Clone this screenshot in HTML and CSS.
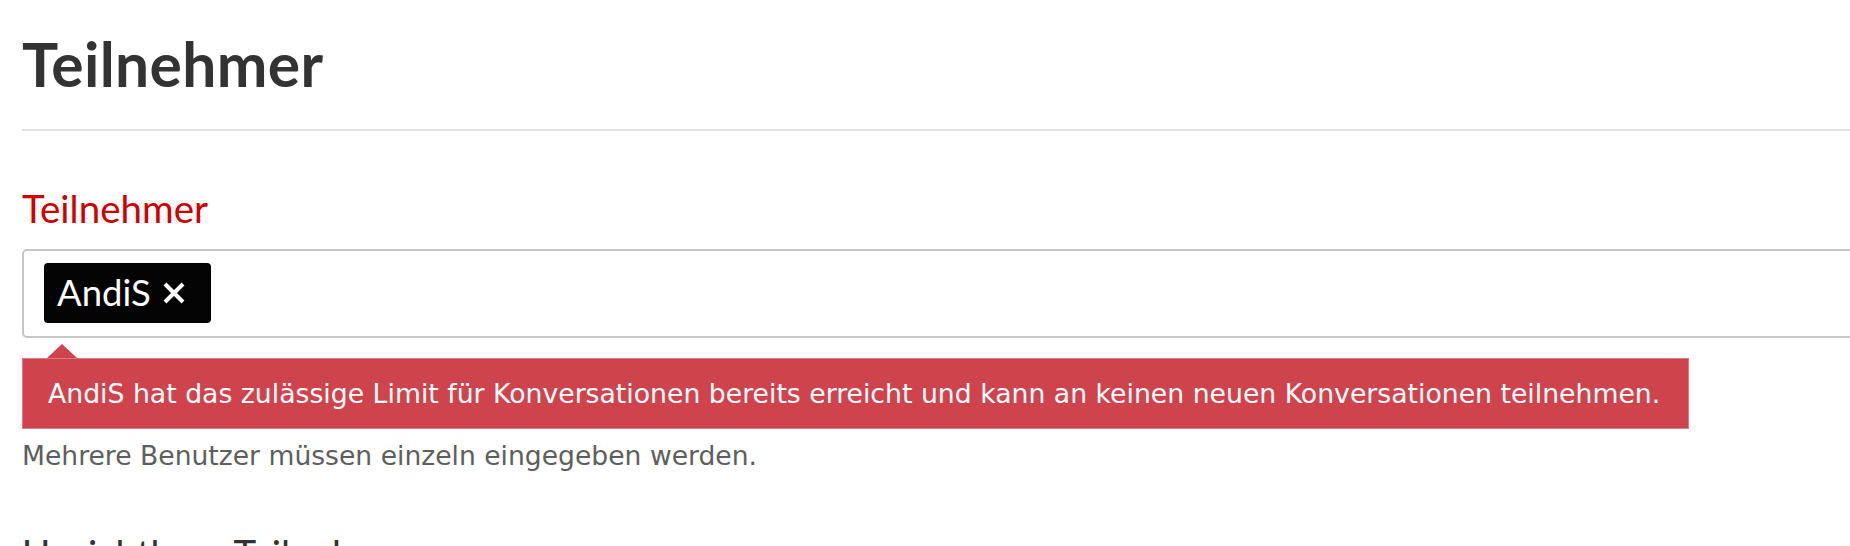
FILE: index.html
```html
<!DOCTYPE html>
<html lang="de">
<head>
<meta charset="utf-8">
<title>Teilnehmer</title>
<link rel="stylesheet" href="styles.css">
</head>
<body>
<div class="page">
  <h1 class="title">Teilnehmer</h1>
  <hr class="divider">
  <div class="field">
    <label class="field-label is-error">Teilnehmer</label>
    <div class="token-input">
      <span class="token"><span class="token-text">AndiS</span><svg class="token-x" viewBox="0 0 24 24" width="24" height="24"><path d="M3 3 L21 21 M21 3 L3 21" stroke="#fff" stroke-width="4" fill="none"/></svg></span>
    </div>
    <div class="error-tip"><span class="tip-arrow"></span>AndiS hat das zulässige Limit für Konversationen bereits erreicht und kann an keinen neuen Konversationen teilnehmen.</div>
    <p class="hint">Mehrere Benutzer müssen einzeln eingegeben werden.</p>
  </div>
  <div class="field field-next">
    <label class="field-label">Unsichtbare Teilnehmer</label>
  </div>
</div>
</body>
</html>
```

FILE: styles.css
```css
html, body {
  margin: 0;
  padding: 0;
  background: #fff;
  overflow: hidden;
}

.page {
  width: 1900px;
  padding: 30px 0 0 22px;
  box-sizing: border-box;
}

.title {
  margin: 0;
  font-family: Lato, "Liberation Sans", sans-serif;
  font-weight: 700;
  font-size: 60.5px;
  letter-spacing: 0.35px;
  line-height: 68px;
  color: #333333;
}

.divider {
  margin: 31px 0 0;
  height: 0;
  border: 0;
  border-top: 2px solid #e2e2e2;
}

.field {
  margin-top: 55px;
}

.field-next {
  margin-top: 60px;
}

.field-label {
  display: block;
  font-family: Lato, "Liberation Sans", sans-serif;
  font-size: 38.5px;
  line-height: 45px;
  color: #333333;
}

.field-label.is-error {
  color: #cc0000;
}

.token-input {
  margin-top: 18px;
  display: flex;
  border: 2px solid #c6c6c6;
  border-radius: 5px;
  padding: 12px 20px 13px;
}

.token {
  display: inline-flex;
  align-items: center;
  gap: 11px;
  height: 60px;
  box-sizing: border-box;
  padding: 0 25px 2px 13px;
  background: #040404;
  color: #ffffff;
  border-radius: 4px;
  font-family: Lato, "Liberation Sans", sans-serif;
  font-size: 36.5px;
}

.token-text {
  line-height: 58px;
}

.token-x {
  display: block;
  margin-top: 2px;
}

.error-tip {
  position: relative;
  width: fit-content;
  margin-top: 20px;
  padding: 19px 28px 19px 25px;
  background: #cf434d;
  border: 1px solid #dc7880;
  color: #ffffff;
  font-family: "DejaVu Sans", Verdana, sans-serif;
  font-size: 26.7px;
  line-height: 31px;
  white-space: nowrap;
}

.tip-arrow {
  position: absolute;
  left: 24px;
  top: -15px;
  width: 0;
  height: 0;
  border-left: 15px solid transparent;
  border-right: 15px solid transparent;
  border-bottom: 14px solid #cf434d;
}

.hint {
  margin: 12px 0 0;
  font-family: "DejaVu Sans", Verdana, sans-serif;
  font-size: 26.6px;
  line-height: 30px;
  color: #5e5e5e;
}
```
